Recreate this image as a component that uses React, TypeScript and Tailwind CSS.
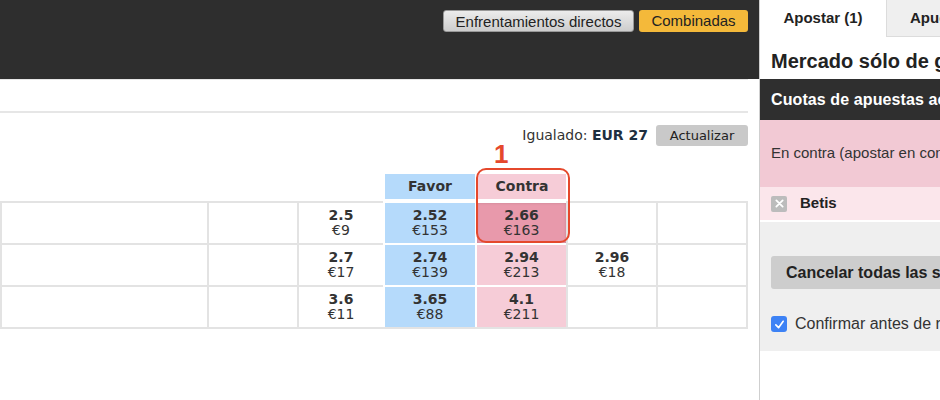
import React from 'react';

type Cell = { price?: string; stake?: string; tone?: 'back' | 'lay' | 'hot' };

const rows: Cell[][] = [
  [{}, {}, { price: '2.5', stake: '€9' }, { price: '2.52', stake: '€153', tone: 'back' }, { price: '2.66', stake: '€163', tone: 'hot' }, {}, {}],
  [{}, {}, { price: '2.7', stake: '€17' }, { price: '2.74', stake: '€139', tone: 'back' }, { price: '2.94', stake: '€213', tone: 'lay' }, { price: '2.96', stake: '€18' }, {}],
  [{}, {}, { price: '3.6', stake: '€11' }, { price: '3.65', stake: '€88', tone: 'back' }, { price: '4.1', stake: '€211', tone: 'lay' }, {}, {}],
];

const toneClass = {
  back: 'bg-[#b5dafb] border-white',
  lay: 'bg-[#f6ccd7] border-white',
  hot: 'bg-[#e899ab] border-white shadow-[inset_0_0_3px_rgba(0,0,0,0.15)]',
};

function OddsCell({ cell, last }: { cell: Cell; last: boolean }) {
  const tone = cell.tone ? toneClass[cell.tone] : 'border-[#e3e3e3]';
  return (
    <div
      className={`h-[42px] border-t-2 border-l-2 flex flex-col items-center justify-center leading-[15px] text-[14px] text-[#333] ${tone} ${last ? 'border-r-2 border-r-[#e3e3e3]' : ''}`}
    >
      {cell.price && <span className="font-bold">{cell.price}</span>}
      {cell.stake && <span>{cell.stake}</span>}
    </div>
  );
}

function BetSlip() {
  return (
    <aside className="w-[320px] flex-none border-l border-[#cfcfcf] font-['Liberation_Sans',Arial,sans-serif] text-[#222]">
      {/* Tabs */}
      <div className="flex h-[37px]">
        <div className="w-[126px] flex items-center justify-center text-[15px] font-bold">Apostar (1)</div>
        <div className="flex-1 flex items-center pl-[23px] bg-[#efefef] border-l border-b border-[#dcdcdc] text-[15px] font-bold">
          Apuestas abiertas
        </div>
      </div>

      <div className="h-[42px] px-[11px] pt-[5px] flex items-center text-[20px] font-bold whitespace-nowrap">
        Mercado sólo de ganador
      </div>

      <div className="h-[41px] px-[11px] flex items-center bg-[#2f2f2f] text-white text-[16px] font-bold whitespace-nowrap tracking-[0.1px]">
        Cuotas de apuestas actualizadas
      </div>

      <div className="h-[67px] px-[11px] flex items-center bg-[#f2c9d4] text-[15px] text-[#333] whitespace-nowrap">
        En contra (apostar en contra de)
      </div>

      <div className="h-[35px] px-[11px] flex items-center gap-[13px] bg-[#fbe6eb] border-b-2 border-white">
        <span className="w-[16px] h-[16px] rounded-[2px] bg-[#bcbcbc] flex items-center justify-center">
          <svg width="9" height="9" viewBox="0 0 10 10">
            <path d="M1.5 1.5 L8.5 8.5 M8.5 1.5 L1.5 8.5" stroke="white" strokeWidth="2" strokeLinecap="round" />
          </svg>
        </span>
        <span className="text-[15px] font-bold">Betis</span>
      </div>

      <div className="h-[129px] bg-[#efefef] px-[11px] pt-[34px]">
        <div className="h-[33px] rounded-[3px] bg-[#cdcdcd] flex items-center pl-[15px] text-[16px] font-bold whitespace-nowrap">
          Cancelar todas las selecciones
        </div>
        <label className="mt-[23px] flex items-center gap-[8px] text-[16px] text-[#333] whitespace-nowrap">
          <span className="w-[16px] h-[16px] rounded-[3px] bg-[#3d82f5] flex items-center justify-center">
            <svg width="11" height="11" viewBox="0 0 12 12">
              <path d="M2 6.5 L5 9.5 L10 2.5" stroke="white" strokeWidth="1.8" fill="none" strokeLinecap="round" strokeLinejoin="round" />
            </svg>
          </span>
          Confirmar antes de realizar apuestas
        </label>
      </div>
    </aside>
  );
}

export default function App() {
  return (
    <div className="w-[940px] h-[400px] overflow-hidden bg-white flex">
      <main className="w-[759px] flex-none">
        {/* Header */}
        <div className="h-[79px] bg-[#2e2e2e] pt-[10px] pr-[11px] flex justify-end items-start gap-[5px] font-['Liberation_Sans',Arial,sans-serif] text-[15px] text-[#222]">
          <button className="h-[22px] w-[191px] rounded-[3px] border border-[#999] bg-gradient-to-b from-[#ececec] to-[#cdcdcd]">
            Enfrentamientos directos
          </button>
          <button className="h-[22px] w-[109px] rounded-[3px] bg-[#f4b93a]">Combinadas</button>
        </div>

        <div className="w-[748px] font-['DejaVu_Sans',Verdana,sans-serif] relative">
          <div className="h-[34px] border-t border-[#e6e6e6] border-b-2 border-b-[#e6e6e6]" />

          {/* Matched amount */}
          <div className="mt-[12px] flex justify-end items-center gap-[8px]">
            <span className="text-[14px] text-[#333]">
              Igualado: <b className="text-[#1e2f40]">EUR 27</b>
            </span>
            <button className="h-[21px] w-[92px] rounded-[3px] bg-[#c9c9c9] text-[13px] text-[#222]">Actualizar</button>
          </div>

          {/* Column headers */}
          <div className="mt-[28px] grid grid-cols-[207px_90px_86px_92px_91px_90px_92px]">
            <div className="col-start-4 h-[25px] ml-[2px] bg-[#b5dafb] flex items-center justify-center text-[14px] font-bold text-[#333]">
              Favor
            </div>
            <div className="h-[25px] ml-[3px] bg-[#f6ccd7] flex items-center justify-center text-[14px] font-bold text-[#333]">
              Contra
            </div>
          </div>

          {/* Odds table */}
          <div className="mt-[2px] border-b-2 border-[#e3e3e3]">
            {rows.map((row, i) => (
              <div key={i} className="grid grid-cols-[207px_90px_86px_92px_91px_90px_92px]">
                {row.map((cell, j) => (
                  <OddsCell key={j} cell={cell} last={j === row.length - 1} />
                ))}
              </div>
            ))}
          </div>

          {/* Annotation */}
          <div className="absolute left-[494px] top-[62px] text-[26px] leading-none font-bold text-[#e5482c] font-['Liberation_Sans',Arial,sans-serif]">
            1
          </div>
          <div className="absolute left-[476px] top-[89px] w-[94px] h-[75px] rounded-[10px] border-[2.5px] border-[#e5482c]" />
        </div>
      </main>
      <BetSlip />
    </div>
  );
}
